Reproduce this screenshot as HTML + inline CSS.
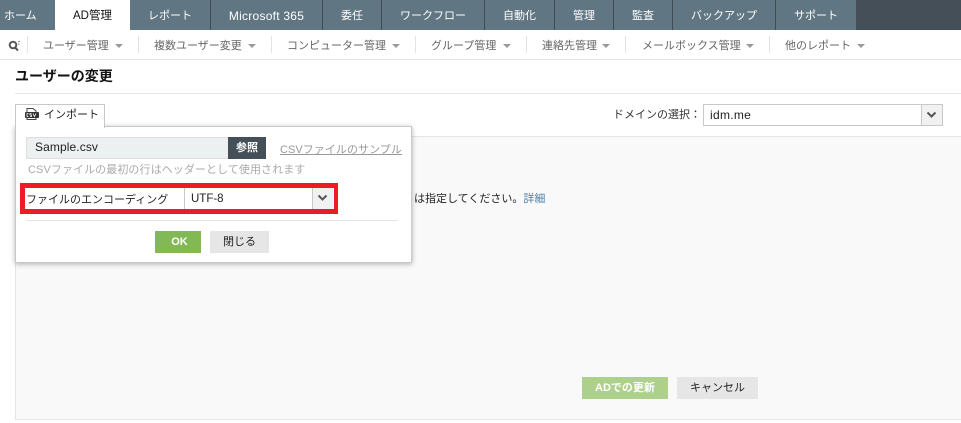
<!DOCTYPE html>
<html lang="ja"><head><meta charset="utf-8"><style>
html,body{margin:0;padding:0;background:#fff;width:961px;height:423px;overflow:hidden}
body{position:relative;font-family:"Liberation Sans","Noto Sans CJK JP",sans-serif;font-size:11px;color:#222}
.a{position:absolute;white-space:nowrap}
.box{position:absolute;box-sizing:border-box}
.t{position:absolute;top:0;height:30px;line-height:32px;text-align:center;color:#fff;background:#607682;box-sizing:border-box;font-size:11px;border-right:1px solid #3f4c54}
.s{position:absolute;top:36px;width:1px;height:17px;background:#e3e3e3}
.m{position:absolute;top:37px;height:18px;line-height:18px;color:#666;white-space:nowrap}
.c{position:absolute;top:44px;width:0;height:0;border-left:4px solid transparent;border-right:4px solid transparent;border-top:4px solid #999}
</style></head><body>
<div class="box" style="left:0;top:0;width:961px;height:30px;background:#444f57"></div>
<div class="t" style="left:0;width:55px;border:0;text-align:left;padding-left:4px">ホーム</div>
<div class="t" style="left:55px;width:75px;background:#fff;color:#111;border:0;font-size:11.500px">AD管理</div>
<div class="t" style="left:130px;width:81px">レポート</div>
<div class="t" style="left:211px;width:112px;font-size:12px;letter-spacing:.25px">Microsoft 365</div>
<div class="t" style="left:323px;width:59px">委任</div>
<div class="t" style="left:382px;width:103px">ワークフロー</div>
<div class="t" style="left:485px;width:70px">自動化</div>
<div class="t" style="left:555px;width:59px">管理</div>
<div class="t" style="left:614px;width:59px">監査</div>
<div class="t" style="left:673px;width:103px">バックアップ</div>
<div class="t" style="left:776px;width:80px;border:0">サポート</div>

<svg class="a" style="left:8px;top:40px" width="12" height="11" viewBox="0 0 12 11"><circle cx="5" cy="5" r="3.300" fill="none" stroke="#555" stroke-width="2"/><path d="M7 7.500L10 10.500" stroke="#555" stroke-width="2"/><path d="M10 1.500h2M10 4h1.500" stroke="#888"/></svg>
<div class="s" style="left:27px"></div><div class="s" style="left:138px"></div><div class="s" style="left:271px"></div><div class="s" style="left:415px"></div><div class="s" style="left:526px"></div><div class="s" style="left:625px"></div><div class="s" style="left:769px"></div>
<div class="m" style="left:43px">ユーザー管理</div><div class="c" style="left:115px"></div>
<div class="m" style="left:154px">複数ユーザー変更</div><div class="c" style="left:248px"></div>
<div class="m" style="left:287px">コンピューター管理</div><div class="c" style="left:392px"></div>
<div class="m" style="left:431px">グループ管理</div><div class="c" style="left:503px"></div>
<div class="m" style="left:542px">連絡先管理</div><div class="c" style="left:602px"></div>
<div class="m" style="left:642px">メールボックス管理</div><div class="c" style="left:746px"></div>
<div class="m" style="left:785px">他のレポート</div><div class="c" style="left:857px"></div>
<div class="box" style="left:0;top:59px;width:961px;height:1px;background:#e5e5e5"></div>

<div class="a" style="left:15px;top:67px;font-size:14px;font-weight:bold;line-height:18px;color:#111">ユーザーの変更</div>
<div class="box" style="left:15px;top:93px;width:946px;height:1px;background:#e5e5e5"></div>

<div class="a" style="left:613px;top:106px;line-height:18px;color:#333">ドメインの選択：</div>
<div class="box" style="left:703px;top:104px;width:240px;height:22px;border:1px solid #c8c8c8;background:#fff"></div>
<div class="a" style="left:710px;top:106px;font-size:12px;line-height:18px;letter-spacing:.3px;color:#222">idm.me</div>
<div class="box" style="left:921px;top:105px;width:21px;height:20px;background:#f1f1f1;border-left:1px solid #c8c8c8"></div>
<svg class="a" style="left:926px;top:111px" width="11" height="8" viewBox="0 0 11 8"><path d="M1.500 1.500L5.500 5.500L9.500 1.500" fill="none" stroke="#555" stroke-width="2"/></svg>

<div class="box" style="left:15px;top:136px;width:946px;height:284px;background:#f9f9f9;border-top:1px solid #e5e5e5;border-left:1px solid #e5e5e5;border-bottom:1px solid #e5e5e5"></div>
<div class="a" style="left:414px;top:191px;line-height:16px;color:#222">は指定してください。<span style="color:#4d7fa6">詳細</span></div>
<div class="box" style="left:582px;top:377px;width:86px;height:22px;background:#add08a;color:#fff;font-weight:bold;text-align:center;line-height:22px">ADでの更新</div>
<div class="box" style="left:677px;top:377px;width:81px;height:22px;background:#e6e6e6;color:#222;text-align:center;line-height:22px">キャンセル</div>

<div class="box" style="left:15px;top:126px;width:397px;height:137px;background:#fff;border:1px solid #c8c8c8;box-shadow:0 1px 5px rgba(0,0,0,.3)"></div>
<div class="box" style="left:15px;top:104px;width:90px;height:24px;background:#fff;border:1px solid #c8c8c8;border-bottom:0"></div>
<svg class="a" style="left:24px;top:107px" width="16" height="14" viewBox="0 0 16 14"><path d="M3 5V1.500H9L12 4V5M3 11v1.500H12V11" fill="none" stroke="#444"/><rect x="1" y="5" width="14" height="6" rx="1" fill="#333"/><path d="M4.500 6.500H3V9.500H4.500M7.500 6.500H6V8H7.500V9.500H6M9 6.500L10.500 9.500L12 6.500" fill="none" stroke="#fff" stroke-width=".8"/></svg>
<div class="a" style="left:44px;top:106px;line-height:18px;color:#222">インポート</div>

<div class="box" style="left:26px;top:137px;width:203px;height:22px;background:#edf0f0;border:1px solid #ddd"></div>
<div class="a" style="left:35px;top:138px;line-height:18px;font-size:12px;letter-spacing:.1px;color:#222">Sample.csv</div>
<div class="box" style="left:228px;top:137px;width:38px;height:22px;background:#444f57;color:#fff;font-weight:bold;text-align:center;line-height:22px">参照</div>
<div class="a" style="left:280px;top:141px;line-height:18px;color:#999;text-decoration:underline;font-size:11px;letter-spacing:.05px">CSVファイルのサンプル</div>
<div class="a" style="left:28px;top:161px;line-height:18px;color:#aaa;font-size:11px;letter-spacing:.08px">CSVファイルの最初の行はヘッダーとして使用されます</div>

<div class="box" style="left:20px;top:183px;width:318px;height:31px;border:5px solid #ed1c24"></div>
<div class="a" style="left:26px;top:191px;line-height:18px;color:#222">ファイルのエンコーディング</div>
<div class="box" style="left:184px;top:188px;width:150px;height:21px;border-left:1px solid #c8c8c8;background:#fff"></div>
<div class="a" style="left:191px;top:190px;line-height:18px;font-size:11.500px;color:#222">UTF-8</div>
<div class="box" style="left:312px;top:188px;width:21px;height:21px;background:#f1f1f1;border-left:1px solid #c8c8c8"></div>
<svg class="a" style="left:317px;top:194px" width="11" height="8" viewBox="0 0 11 8"><path d="M1.500 1.500L5.500 5.500L9.500 1.500" fill="none" stroke="#555" stroke-width="2"/></svg>

<div class="box" style="left:26px;top:220px;width:372px;height:1px;background:#e5e5e5"></div>
<div class="box" style="left:155px;top:231px;width:46px;height:22px;background:#82b955;color:#fff;font-weight:bold;font-size:11px;padding-left:3px;text-align:center;line-height:23px">OK</div>
<div class="box" style="left:210px;top:231px;width:59px;height:22px;background:#e6e6e6;color:#222;text-align:center;line-height:22px">閉じる</div>
</body></html>
